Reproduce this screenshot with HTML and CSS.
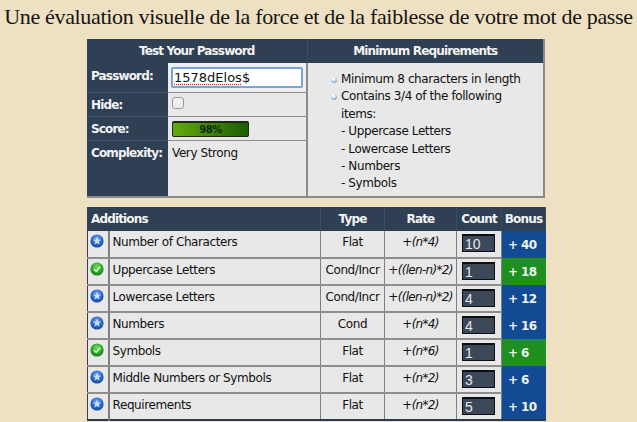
FILE: index.html
```html
<!DOCTYPE html>
<html lang="fr">
<head>
<meta charset="utf-8">
<title>Mot de passe</title>
<link rel="stylesheet" href="styles.css">
</head>
<body>
<svg class="defs" width="0" height="0" aria-hidden="true">
  <defs>
    <radialGradient id="gb" cx="50%" cy="35%" r="65%"><stop offset="0" stop-color="#7fb2f0"/><stop offset="0.6" stop-color="#2a68cc"/><stop offset="1" stop-color="#17489c"/></radialGradient>
    <radialGradient id="gg" cx="50%" cy="35%" r="65%"><stop offset="0" stop-color="#7fe05a"/><stop offset="0.6" stop-color="#2fa82c"/><stop offset="1" stop-color="#19751c"/></radialGradient>
    <symbol id="i-star" viewBox="0 0 14 14"><circle cx="7" cy="7" r="6.6" fill="url(#gb)"/><path d="M7 2.8 8.1 5.6 11 5.8 8.8 7.6 9.6 10.6 7 9 4.4 10.6 5.2 7.6 3 5.8 5.9 5.6Z" fill="#c9dcfa"/></symbol>
    <symbol id="i-check" viewBox="0 0 14 14"><circle cx="7" cy="7" r="6.6" fill="url(#gg)"/><path d="M4 7.2 6.2 9.4 10.2 4.8" fill="none" stroke="#f2fff0" stroke-width="1.3"/></symbol>
  </defs>
</svg>
<h1>Une évaluation visuelle de la force et de la faiblesse de votre mot de passe</h1>
<table class="panel test">
  <colgroup><col class="c-label"><col class="c-field"><col></colgroup>
  <tr class="r-head"><th colspan="2">Test Your Password</th><th>Minimum Requirements</th></tr>
  <tr class="r-pass">
    <th class="label">Password:</th>
    <td class="field"><div class="pass"><span class="misspelt">1578dElos</span>$</div></td>
    <td class="reqs" rowspan="4">
      <ul>
        <li>Minimum 8 characters in length</li>
        <li>Contains 3/4 of the following items:</li>
        <li class="sub">- Uppercase Letters</li>
        <li class="sub">- Lowercase Letters</li>
        <li class="sub">- Numbers</li>
        <li class="sub">- Symbols</li>
      </ul>
    </td>
  </tr>
  <tr class="r-hide"><th class="label">Hide:</th><td class="field"><span class="check"></span></td></tr>
  <tr class="r-score"><th class="label">Score:</th><td class="field"><div class="meter">98%</div></td></tr>
  <tr class="r-comp"><th class="label">Complexity:</th><td class="field">Very Strong</td></tr>
</table>
<table class="panel adds">
  <colgroup><col class="c-icon"><col class="c-name"><col class="c-type"><col class="c-rate"><col class="c-count"><col class="c-bonus"></colgroup>
  <tr class="r-head"><th class="left" colspan="2">Additions</th><th>Type</th><th>Rate</th><th>Count</th><th>Bonus</th></tr>
  <tr><td class="ic"><svg><use href="#i-star"/></svg></td><td class="name">Number of Characters</td><td class="mid">Flat</td><td class="rate">+<i>(n*4)</i></td><td class="count"><input value="10" size="2"></td><td class="bonus blue">+ 40</td></tr>
  <tr><td class="ic"><svg><use href="#i-check"/></svg></td><td class="name">Uppercase Letters</td><td class="mid">Cond/Incr</td><td class="rate">+<i>((len-n)*2)</i></td><td class="count"><input value="1" size="2"></td><td class="bonus green">+ 18</td></tr>
  <tr><td class="ic"><svg><use href="#i-star"/></svg></td><td class="name">Lowercase Letters</td><td class="mid">Cond/Incr</td><td class="rate">+<i>((len-n)*2)</i></td><td class="count"><input value="4" size="2"></td><td class="bonus blue">+ 12</td></tr>
  <tr><td class="ic"><svg><use href="#i-star"/></svg></td><td class="name">Numbers</td><td class="mid">Cond</td><td class="rate">+<i>(n*4)</i></td><td class="count"><input value="4" size="2"></td><td class="bonus blue">+ 16</td></tr>
  <tr><td class="ic"><svg><use href="#i-check"/></svg></td><td class="name">Symbols</td><td class="mid">Flat</td><td class="rate">+<i>(n*6)</i></td><td class="count"><input value="1" size="2"></td><td class="bonus green">+ 6</td></tr>
  <tr><td class="ic"><svg><use href="#i-star"/></svg></td><td class="name">Middle Numbers or Symbols</td><td class="mid">Flat</td><td class="rate">+<i>(n*2)</i></td><td class="count"><input value="3" size="2"></td><td class="bonus blue">+ 6</td></tr>
  <tr><td class="ic"><svg><use href="#i-star"/></svg></td><td class="name">Requirements</td><td class="mid">Flat</td><td class="rate">+<i>(n*2)</i></td><td class="count"><input value="5" size="2"></td><td class="bonus blue">+ 10</td></tr>
</table>
</body>
</html>
```
FILE: styles.css
```css
* { box-sizing: border-box; }
html, body { height: 100%; overflow: hidden; }
body {
  margin: 0;
  background: #eee0c3;
  color: #111;
  font: 12px/17px "DejaVu Sans", sans-serif;
  letter-spacing: -0.4px;
}
.defs { position: absolute; }
h1 {
  margin: 0;
  padding-top: 4px;
  height: 39px;
  text-align: center;
  font: 400 22px/26px "Liberation Serif", serif;
  letter-spacing: -0.33px;
  white-space: nowrap;
  color: #161412;
}
.panel {
  width: 458px;
  margin: 0 0 0 87px;
  table-layout: fixed;
  border-collapse: collapse;
  background: #e8e8e8;
}
.panel th, .panel td { padding: 0; vertical-align: middle; }
.panel th { background: #2f4054; color: #f4f4f4; font-weight: 700; letter-spacing: -0.85px; }
.r-head th { height: 24px; border-right: 1px solid #3d4d60; }
.test { height: 159px; margin-bottom: 9px; border-right: 2px solid #8a8a8a; border-bottom: 2px solid #8a8a8a; }
.c-label { width: 81px; }
.c-field { width: 139px; }
.test .label { text-align: left; padding-left: 4px; vertical-align: top; padding-top: 4px; border-bottom: 1px solid #45566a; }
.test .r-pass .label { padding-top: 5px; }
.test .field { padding-left: 4px; vertical-align: top; border-bottom: 1px solid #8c8c8c; border-right: 2px solid #8a8a8a; }
.r-pass th, .r-pass .field { height: 29px; }
.r-hide th, .r-hide .field { height: 24px; }
.r-score th, .r-score .field { height: 24px; }
.test .r-comp .field { padding-top: 4px; border-bottom: 0; }
.test .r-comp .label { border-bottom: 0; }
.test .r-pass .field { background: #edf0f2; padding: 4px 0 0 3px; }
.pass {
  width: 132px;
  height: 21px;
  background: #fff;
  border: 2px solid #7ba3d4;
  border-radius: 2px;
  padding-left: 1px;
  color: #111;
  font-size: 13px;
  line-height: 18px;
  letter-spacing: 0;
}
.misspelt { text-decoration: underline dotted #d22; text-underline-offset: 2px; }
.check {
  display: block;
  margin-top: 4px;
  width: 12px;
  height: 12px;
  background: #eee;
  border: 1px solid #9b9b9b;
  border-radius: 3px;
}
.meter {
  margin-top: 4px;
  width: 77px;
  height: 16px;
  border: 1px solid #1c2a12;
  border-top-width: 2px;
  border-radius: 2px;
  background: linear-gradient(90deg, #63ab0c, #1d5c06);
  color: #0e2a04;
  font-size: 10px;
  font-weight: 700;
  line-height: 13px;
  text-align: center;
}
.panel .reqs { vertical-align: top; padding-top: 8px; border-left: 1px solid #c8c8c8; }
.reqs ul { margin: 0; padding: 0 0 0 33px; list-style: none; line-height: 17.4px; }
.reqs li { position: relative; padding-right: 8px; }
.reqs li:not(.sub)::before {
  content: "";
  position: absolute;
  left: -10px;
  top: 6px;
  width: 6px;
  height: 6px;
  border-radius: 50%;
  background: radial-gradient(circle at 40% 30%, #fff 15%, #7fa6d8 75%);
}
.c-icon { width: 21px; }
.c-type { width: 64px; }
.c-rate { width: 72px; }
.c-count { width: 45px; }
.c-bonus { width: 44px; }
.c-name { width: 212px; }
.adds { border-bottom: 2px solid #2a394b; border-left: 1px solid #2f4054; }
.adds .left { text-align: left; padding-left: 3px; }
.adds tr:not(.r-head) td { height: 27px; border-bottom: 2px solid #8e8e8e; border-right: 1px solid #7d7f82; vertical-align: top; padding-top: 3px; }
.adds tr:not(.r-head) td.ic { border-right-width: 2px; }
.adds tr:last-child td { border-bottom: 0; }
.ic svg { display: block; width: 14px; height: 14px; margin-left: 2px; }
.adds td.name { padding-left: 3px; }
.mid { text-align: center; }
.rate { text-align: center; font-size: 12px; letter-spacing: -0.7px; }
.rate i { font-style: italic; }
.adds td.count { padding: 4px 0 0 5px; }
.count input {
  display: block;
  width: 33px;
  height: 18px;
  padding: 1px 0 0 2px;
  background: #3b4859;
  color: #e9e9e9;
  border: 1px solid #0c0f14;
  border-top-width: 2px;
  border-radius: 0;
  font: 14px/14px "Liberation Sans", sans-serif;
}
.adds tr td.bonus { border-right: 0; border-bottom: 0; color: #eef3ee; font-weight: 700; padding: 6px 0 0 6px; font-size: 12px; letter-spacing: -0.6px; }
.blue { background: #124a94; }
.green { background: #1f8f1f; }
```
